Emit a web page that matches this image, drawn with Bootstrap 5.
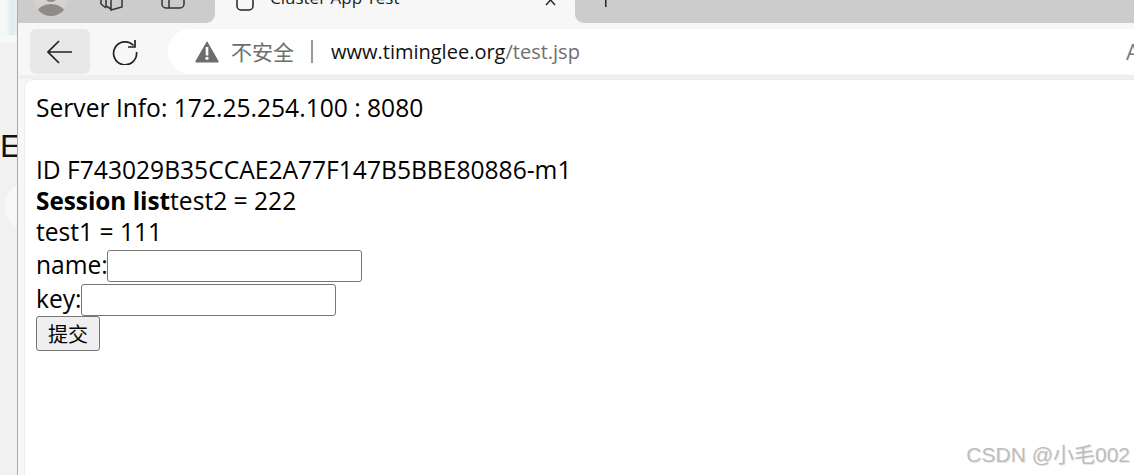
<!DOCTYPE html>
<html lang="en">
<head>
    <meta charset="UTF-8">
    <meta name="viewport" content="width=device-width, initial-scale=1.0">
    <title>Cluster App Test</title>
    <link href="https://cdn.jsdelivr.net/npm/bootstrap@5.3.0/dist/css/bootstrap.min.css" rel="stylesheet">
    <style>
        html, body { height: 475px; overflow: hidden; background: #fff; }
        body { font-family: "Open Sans", "Noto Sans CJK SC", sans-serif; color: #000; }

        /* desktop sliver on the left of the browser window */
        .desk-strip { width: 18px; flex: none; overflow: hidden; background: #f1f1f1; border-right: 1px solid #aaa; }
        .desk-top { height: 43px; background: linear-gradient(90deg, #f6f8f8 35%, #dcecf1 70%, #e6f0f2 100%); border-bottom: 8px solid #f8f8f8; }
        .desk-letter { font: 32px/38px "Liberation Sans", sans-serif; margin: 84px 0 0 0; height: 38px; color: #111; }
        .desk-circle { width: 60px; height: 54px; margin: 14px 0 0 5px; border-radius: 50%; background: #f8f8f8; }

        .browser { min-width: 0; background: #f7f7f7; }

        /* tab strip, cut off by the top of the picture */
        .tab-strip { height: 23px; overflow: hidden; }
        .tab-side { background: #ccc; height: 23px; }
        .tab-left { width: 197px; border-bottom-right-radius: 9px; }
        .tab-right { border-bottom-left-radius: 9px; }
        .tab-active { width: 360px; height: 23px; background: #f7f7f7; }
        .avatar { width: 34px; height: 34px; margin: -18px 0 0 16px; border-radius: 50%; background: #d5d2cf; overflow: hidden; }
        .tab-stack-icon { margin-left: 31px; }
        .tab-side-icon { margin-left: 36px; }
        .tab-page-icon { margin-left: 20px; }
        .tab-title { font: 17px/20px "Open Sans", sans-serif; margin: -12px 0 0 15px; color: #222; white-space: nowrap; }
        .tab-close { margin-right: 16px; }
        .tab-plus { margin-left: 30px; display: block; }

        /* toolbar */
        .tool-row { height: 52px; padding: 6px 0 1px 12px; }
        .back-btn { width: 60px; height: 45px; background: #e8e8e8; border-radius: 6px; }
        .reload-btn { width: 78px; height: 45px; padding-left: 22px; }
        .addr-bar { height: 45px; background: #fff; border-radius: 22px 0 0 22px; padding-left: 27px; font-size: 20px; white-space: nowrap; }
        .addr-warn { color: #6d6d6d; font-family: "Noto Sans CJK SC", sans-serif; font-size: 21px; margin-left: 12px; }
        .addr-sep { width: 2px; height: 23px; background: #999; margin: 0 18px 0 17px; }
        .addr-host { color: #111; }
        .addr-path { color: #6f6f6f; }
        .addr-read { color: #777; font-size: 22px; margin-right: -6px; }

        .page-wrap { padding: 4px 0 0 6px; background: linear-gradient(#efefef 0 4px, #f7f7f7 4px); }
        .page-body { height: 396px; background: #fff; border: 1px solid #ececec; border-width: 1px 0 0 1px; border-top-left-radius: 9px; padding: 12px 0 0 11px; font-size: 24.6px; line-height: 31px; }
        .page-body b { font-size: 24.3px; }
        .blank-line { height: 31px; }
        .plain-form { padding-top: 1px; }
        .field-row { height: 34px; line-height: 34px; }
        .plain-input { width: 255px; height: 32px; margin-left: -1px; padding: 0 4px; border: 1px solid #767676; border-radius: 3px; background: #fff; vertical-align: bottom; }
        .plain-btn { display: block; width: 64px; height: 35px; padding: 0; font: 20px/30px "Noto Sans CJK SC", sans-serif; color: #000; background: #efefef; border: 1px solid #767676; border-radius: 3px; }

        .watermark { position: absolute; right: 4px; top: 441px; font: 21px/28px "Liberation Sans", "Noto Sans CJK SC", sans-serif; color: #bdbdbd; text-shadow: 1px 1px 1px #e6e6e6; }
    </style>
</head>
<body>
    <div class="d-flex position-relative">
        <!-- desktop behind the window -->
        <div class="desk-strip">
            <div class="desk-top"></div>
            <div class="desk-letter">E</div>
            <div class="desk-circle"></div>
        </div>

        <div class="browser flex-grow-1">
            <!-- Tab strip -->
            <div class="tab-strip d-flex">
                <div class="tab-side tab-left d-flex">
                    <div class="avatar">
                        <svg width="34" height="34" viewBox="0 0 34 34"><circle cx="17" cy="13" r="7" fill="#8f8b87"/><ellipse cx="17" cy="31" rx="14" ry="9" fill="#8f8b87"/></svg>
                    </div>
                    <svg class="tab-stack-icon" width="26" height="11" viewBox="0 0 26 11" fill="none" stroke="#333" stroke-width="1.5"><path d="M2 -4V4l5 4M7 -4V6l5 3M12 -4V10l11-3V-4"/></svg>
                    <svg class="tab-side-icon" width="24" height="9" viewBox="0 0 24 9" fill="none" stroke="#333" stroke-width="1.5"><path d="M1 -6V4a4 4 0 0 0 4 4h14a4 4 0 0 0 4-4V-6M8 -6V8"/></svg>
                </div>
                <div class="tab-active d-flex">
                    <svg class="tab-page-icon" width="20" height="11" viewBox="0 0 20 11" fill="none" stroke="#222" stroke-width="1.5"><path d="M2 -5V6a4 4 0 0 0 4 4h8a4 4 0 0 0 4-4V-5"/></svg>
                    <div class="tab-title flex-grow-1">Cluster App Test</div>
                    <svg class="tab-close" width="16" height="6" viewBox="0 0 16 6" fill="none" stroke="#222" stroke-width="1.4"><path d="M3 -5l9 10M12 -5L3 5"/></svg>
                </div>
                <div class="tab-side tab-right flex-grow-1">
                    <svg class="tab-plus" width="2" height="7"><rect width="1.5" height="7" fill="#222"/></svg>
                </div>
            </div>

            <!-- Toolbar -->
            <div class="tool-row d-flex">
                <div class="back-btn d-flex align-items-center justify-content-center">
                    <svg width="26" height="24" viewBox="0 0 26 24" fill="none" stroke="#222" stroke-width="1.7"><path d="M1 12h24M12 1L1 12l11 11"/></svg>
                </div>
                <div class="reload-btn d-flex align-items-center">
                    <svg width="26" height="26" viewBox="0 0 26 26" fill="none" stroke="#222" stroke-width="1.7"><path d="M21.5 6.5A11.5 11.5 0 1 0 24.5 13"/><path d="M23 1v7h-7"/></svg>
                </div>
                <div class="addr-bar d-flex align-items-center flex-grow-1 overflow-hidden">
                    <svg width="24" height="23" viewBox="0 0 24 23"><path d="M12 1L23.5 21a1 1 0 0 1-1 1.5H1.5a1 1 0 0 1-1-1.5z" fill="#6d6d6d"/><rect x="10.7" y="7" width="2.6" height="8.5" fill="#fff"/><circle cx="12" cy="18.3" r="1.6" fill="#fff"/></svg>
                    <span class="addr-warn">不安全</span>
                    <span class="addr-sep"></span>
                    <span class="addr-host">www.timinglee.org</span><span class="addr-path">/test.jsp</span>
                    <span class="addr-read ms-auto">A</span>
                </div>
            </div>

            <!-- Page content -->
            <div class="page-wrap">
                <div class="page-body">
                    <div>Server Info: 172.25.254.100 : 8080</div>
                    <div class="blank-line"></div>
                    <div>ID F743029B35CCAE2A77F147B5BBE80886-m1</div>
                    <div><b>Session list</b>test2 = 222</div>
                    <div>test1 = 111</div>
                    <form class="plain-form">
                        <div class="field-row">name:<input class="plain-input" type="text"></div>
                        <div class="field-row">key:<input class="plain-input" type="text"></div>
                        <button class="plain-btn" type="button">提交</button>
                    </form>
                </div>
            </div>
        </div>

        <div class="watermark">CSDN @小毛002</div>
    </div>

    <script src="https://cdn.jsdelivr.net/npm/bootstrap@5.3.0/dist/js/bootstrap.bundle.min.js"></script>
</body>
</html>
